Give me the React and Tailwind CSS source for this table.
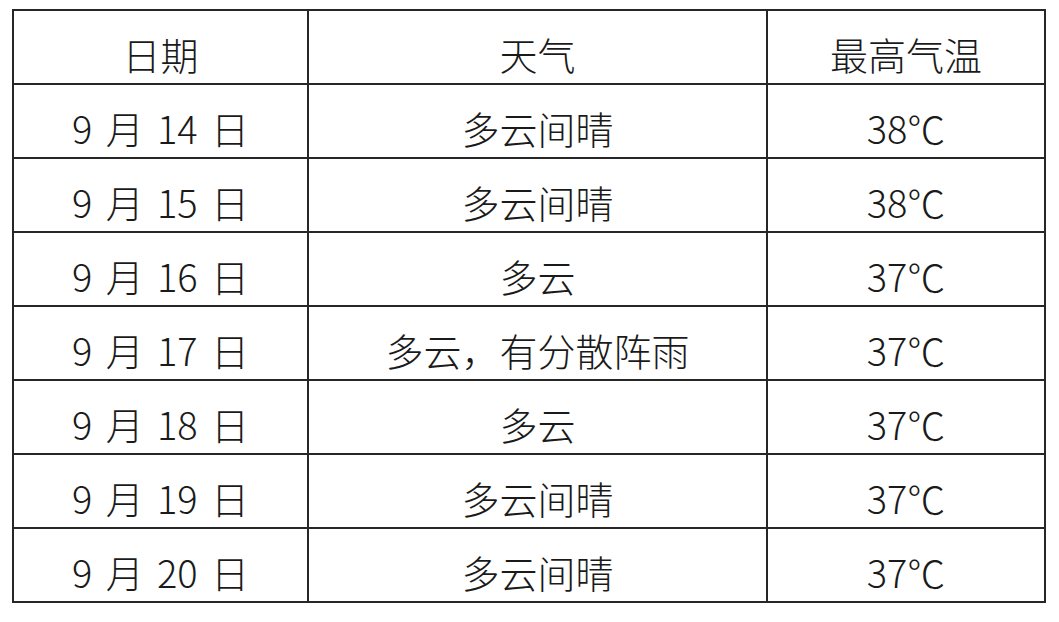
const rows = [
  ['9 月 14 日', '多云间晴', '38℃'],
  ['9 月 15 日', '多云间晴', '38℃'],
  ['9 月 16 日', '多云', '37℃'],
  ['9 月 17 日', '多云，有分散阵雨', '37℃'],
  ['9 月 18 日', '多云', '37℃'],
  ['9 月 19 日', '多云间晴', '37℃'],
  ['9 月 20 日', '多云间晴', '37℃'],
]

const cell = 'border-2 border-[#262626] h-[74px] p-0 pt-[14px] text-center align-middle leading-none font-light'

export default function App() {
  return (
    <div className="w-[1059px] h-[622px] bg-white pl-[12px] pt-[9px]"
      style={{ fontFamily: '"Noto Sans CJK SC", "Noto Sans", sans-serif' }}>
      <table className="border-collapse w-[1032px] text-[38px] text-[#1a1a1a] table-fixed">
        <colgroup>
          <col className="w-[295px]" />
          <col className="w-[459px]" />
          <col className="w-[278px]" />
        </colgroup>
        <thead>
          <tr>
            <th className={cell}>日期</th>
            <th className={cell}>天气</th>
            <th className={cell}>最高气温</th>
          </tr>
        </thead>
        <tbody>
          {rows.map(([d, w, t]) => (
            <tr key={d}>
              <td className={`${cell} [word-spacing:5px]`}>{d}</td>
              <td className={cell}>{w}</td>
              <td className={cell}>{t}</td>
            </tr>
          ))}
        </tbody>
      </table>
    </div>
  )
}
